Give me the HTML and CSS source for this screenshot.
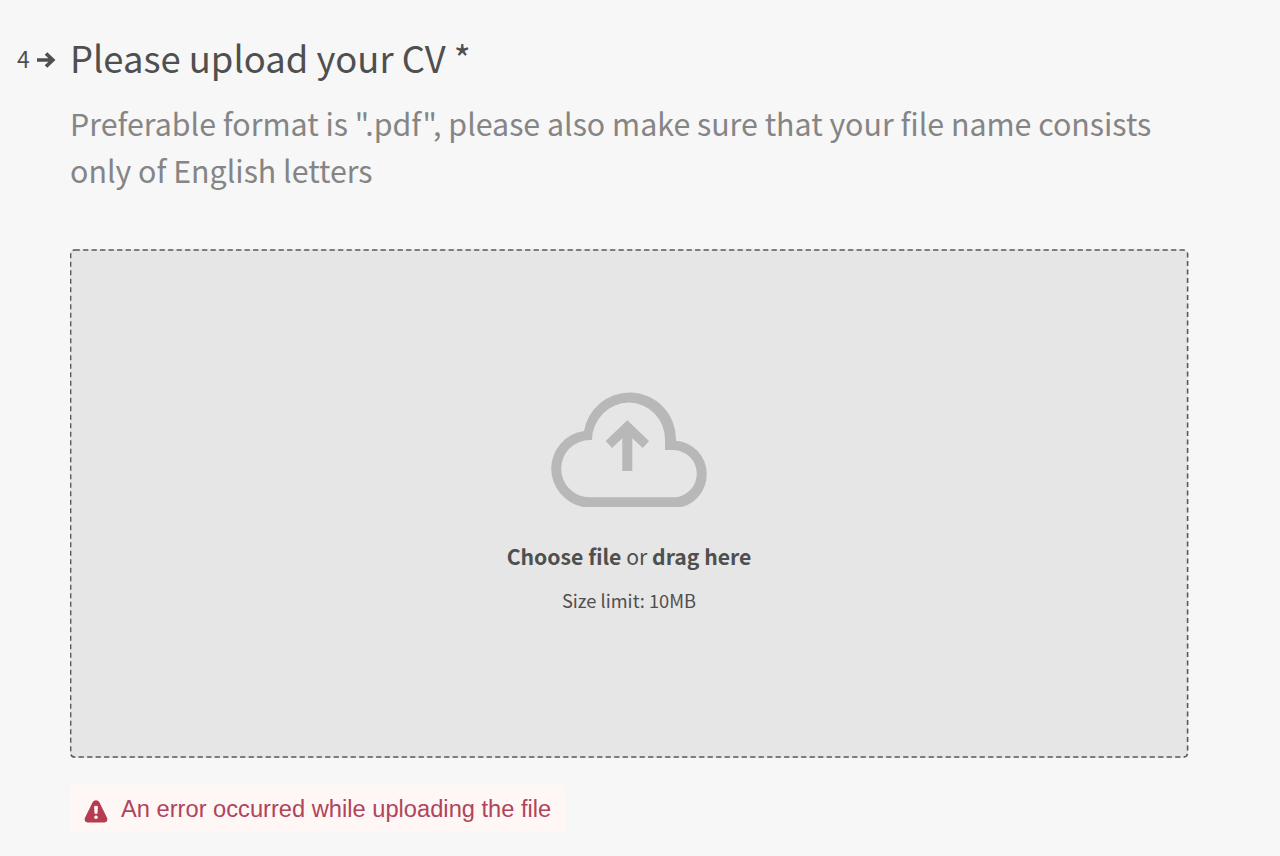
FILE: index.html
```
<!DOCTYPE html>
<html lang="en">
<head>
    <meta charset="UTF-8">
    <meta name="viewport" content="width=device-width, initial-scale=1.0">
    <title>Please upload your CV</title>
    <link rel="stylesheet" href="styles.css">
</head>
<body>
    <main class="question">
        <div class="question-number">
            <span class="number">4</span>
            <svg class="arrow-icon" width="19" height="16" viewBox="0 0 19 16">
                <path d="M0 8H16.5M9 1.5L15.8 8L9 14.5" fill="none" stroke="#4f4f4f" stroke-width="3.7"/>
            </svg>
        </div>
        <div class="question-content">
            <h1 class="title">Please upload your CV *</h1>
            <p class="description">Preferable format is ".pdf", please also make sure that your file name consists only of English letters</p>

            <!-- Drop area -->
            <div class="dropzone">
                <svg class="dropzone-border" width="1119" height="509">
                    <rect x="0.6" y="1" width="1117" height="507" rx="4" fill="none" stroke="#5a5a5a" stroke-width="1.6" stroke-dasharray="5.2 3.3"/>
                </svg>
                <svg class="cloud-icon" width="156" height="115" viewBox="551 392 156 115">
                    <path fill-rule="evenodd" d="M584 431A46.5 46.5 0 0 1 630 392.5A46.5 47 0 0 1 676 440.7A33.3 33.3 0 0 1 706.7 474A34 34 0 0 1 682 507H583A39.5 39.5 0 0 1 551.2 469A38.5 38 0 0 1 584 431ZM592 440A37.5 37.5 0 0 1 629 402.6A36.5 36.5 0 0 1 665 439V450H673.5A23.6 23.6 0 0 1 696.8 473.7A23.6 23.6 0 0 1 673.5 497.3H590A28.6 28.6 0 0 1 561.2 468.7A28.6 28.6 0 0 1 590 440Z"/>
                    <path d="M627.3 420.3L649 441L642.7 448L632.3 438.3V471H622.3V438.3L612 448L605.7 441Z"/>
                </svg>
                <p class="choose"><strong>Choose file</strong> or <strong>drag here</strong></p>
                <p class="limit">Size limit: 10MB</p>
            </div>

            <!-- Upload error -->
            <div class="error">
                <svg class="error-icon" width="24" height="23" viewBox="0 0 24 23">
                    <path d="M12 0.3C13.4 0.3 14.6 1 15.5 2.5L23 17.8C24 20.3 22.8 22.4 20.4 22.4H3.6C1.2 22.4 0 20.3 1 17.8L8.5 2.5C9.4 1 10.6 0.3 12 0.3Z" fill="#b43b50"/>
                    <path d="M10 6.5Q12 5 14 6.5L13.4 13.7H10.6Z" fill="#fff6f6"/>
                    <circle cx="12" cy="17.3" r="1.8" fill="#fff6f6"/>
                </svg>
                <span>An error occurred while uploading the file</span>
            </div>
        </div>
    </main>
</body>
</html>
```
FILE: styles.css
```
* {
    box-sizing: border-box;
}
body {
    margin: 0;
    background-color: #f7f7f7;
    color: #4f4f4f;
    font-family: "Noto Sans CJK SC", "Noto Sans", sans-serif;
}
.question {
    display: flex;
    padding: 27px 0 0 17px;
}
.question-number {
    display: flex;
    align-items: center;
    gap: 7px;
    width: 53px;
    height: 65px;
    font-size: 22.8px;
}
.number {
    margin-bottom: 2px;
    line-height: 30px;
}
.question-content {
    width: 1118px;
}
.title {
    margin: 0;
    font-size: 36.4px;
    font-weight: 400;
    line-height: 60px;
    white-space: nowrap;
}
.description {
    margin: 13px 0 0;
    color: #858585;
    font-size: 30.35px;
    line-height: 47px;
}
.dropzone {
    position: relative;
    display: flex;
    flex-direction: column;
    align-items: center;
    height: 509px;
    margin-top: 55px;
    padding-top: 143px;
    border-radius: 5px;
    background-color: #e6e6e6;
}
.dropzone-border {
    position: absolute;
    top: 0;
    left: 0;
}
.cloud-icon {
    fill: #b8b8b8;
}
.choose {
    margin: 32px 0 0;
    font-size: 21.2px;
    line-height: 34px;
}
.limit {
    margin: 13px 0 0;
    font-size: 18.25px;
    line-height: 28px;
}
.error {
    display: inline-flex;
    align-items: center;
    gap: 13px;
    height: 47px;
    margin-top: 27px;
    padding: 2px 14px 0;
    background-color: #fff6f6;
    color: #b0445a;
    font-family: "Liberation Sans", Arial, sans-serif;
    font-size: 23.68px;
    white-space: nowrap;
}
.error-icon {
    margin-top: 3px;
}
```
